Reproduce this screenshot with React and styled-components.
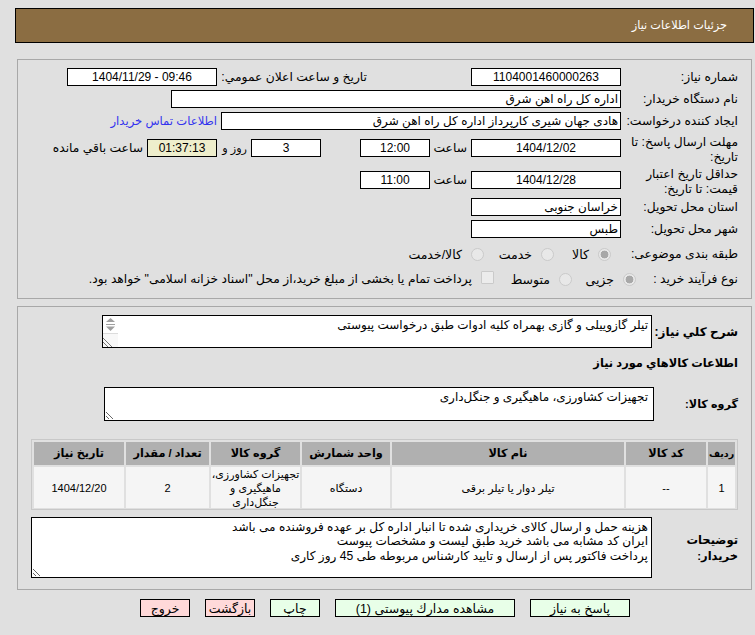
import React from "react";
import styled, { createGlobalStyle } from "styled-components";

const Global = createGlobalStyle`
  html, body { margin: 0; padding: 0; background: #e0e0e0; }
  body { font: 12px "Liberation Sans", "DejaVu Sans", sans-serif; color: #000; }
  * { box-sizing: border-box; }
`;

const Page = styled.div`
  width: 755px;
  height: 635px;
  overflow: hidden;
  padding-top: 8px;
  direction: rtl;
`;

const Header = styled.div`
  margin: 0 1px 16px 0;
  width: 739px;
  height: 35px;
  background: #8b6d42;
  border: 1px solid #000;
  color: #fff;
  font-size: 11.3px;
  display: flex;
  align-items: center;
  padding-right: 26px;
`;

const Panel = styled.div`
  width: 735px;
  margin: ${(p) => p.$mt || 0}px 3px 0 0;
  height: ${(p) => p.$h}px;
  border: 1px solid #a8a8a8;
  padding: 8px 13px 0 0;
  display: flex;
  flex-direction: column;
  gap: ${(p) => p.$gap || 0}px;
`;

const Row = styled.div`
  display: flex;
  align-items: center;
  height: ${(p) => p.$h || 18}px;
  margin-top: ${(p) => p.$mt || 0}px;
`;

const Label = styled.div`
  flex: none;
  width: ${(p) => p.$w || 117}px;
  padding-top: ${(p) => p.$pt || 0}px;
  line-height: ${(p) => (p.$bold ? 16 : 14.5)}px;
  font-weight: ${(p) => (p.$bold ? 700 : 400)};
  font-size: ${(p) => p.$fs || 12.3}px;
  white-space: ${(p) => (p.$nowrap ? "nowrap" : "normal")};
`;

const Field = styled.div`
  flex: none;
  width: ${(p) => p.$w || 150}px;
  height: 18px;
  margin-right: ${(p) => p.$mr || 0}px;
  background: ${(p) => p.$bg || "#fff"};
  border: 1px solid #000;
  text-align: ${(p) => (p.$start ? "right" : "center")};
  padding: 0 2px;
  line-height: 16px;
  font-size: 12px;
  white-space: nowrap;
  overflow: hidden;
`;

const Ltr = styled.span`
  direction: ltr;
  unicode-bidi: isolate;
`;

const Text = styled.span`
  flex: none;
  width: ${(p) => p.$w}px;
  margin-right: ${(p) => p.$mr ?? 4}px;
  font-size: ${(p) => p.$fs || 12.3}px;
  white-space: nowrap;
`;

const Link = styled.a`
  flex: none;
  margin-right: 4px;
  color: #3333ee;
  font-size: 11.6px;
  text-decoration: none;
  white-space: nowrap;
`;

const Option = styled.label`
  flex: none;
  width: ${(p) => p.$w}px;
  display: flex;
  align-items: center;
  gap: ${(p) => p.$gap || 9}px;
  font-size: ${(p) => p.$fs || 12.5}px;
  white-space: nowrap;
`;

const Radio = styled.input.attrs({ type: "radio", disabled: true })`
  appearance: none;
  margin: 0;
  width: 13px;
  height: 13px;
  flex: none;
  border: 1px solid #cacaca;
  border-radius: 50%;
  background: #e8e8e8;
  &:checked {
    background: radial-gradient(circle, #a8a8a8 0 3.6px, #e8e8e8 4.2px);
  }
`;

const Check = styled.input.attrs({ type: "checkbox", disabled: true })`
  appearance: none;
  margin: 0 0 3px 0;
  width: 13px;
  height: 13px;
  flex: none;
  border: 1px solid #cacaca;
  border-radius: 1px;
  background: #ececec;
`;

const AreaWrap = styled.div`
  position: relative;
  flex: none;
  display: block;
`;

const Area = styled.textarea.attrs({ readOnly: true, dir: "rtl" })`
  display: block;
  width: ${(p) => p.$w}px;
  height: ${(p) => p.$h}px;
  background: #fff;
  border: 1px solid #000;
  border-radius: 0;
  padding: 2px ${(p) => p.$pr || 3}px 2px 3px;
  margin: 0;
  font: ${(p) => p.$fs || 12}px/14.25px "Liberation Sans", "DejaVu Sans", sans-serif;
  color: #000;
  resize: both;
  outline: none;
  overflow: hidden;
`;

const ScrollArt = styled.svg`
  position: absolute;
  left: 1px;
  top: 1px;
  width: 15px;
  height: 31px;
  pointer-events: none;
`;

const Grid = styled.div`
  width: 707px;
  height: 71px;
  margin-top: ${(p) => p.$mt || 0}px;
  border: 1px solid #c8c8c8;
  padding: 2px 2px 1px;
  display: grid;
  grid-template-columns: 27px 80px 232px 88px 89px 83px 90px;
  grid-template-rows: 23px 41px;
  gap: 2px;
`;

const Th = styled.div`
  background: #b0b0b0;
  font-weight: 700;
  font-size: ${(p) => p.$fs || 11.3}px;
  display: flex;
  align-items: center;
  justify-content: center;
  white-space: nowrap;
`;

const Td = styled.div`
  background: #f5f5f5;
  font-size: 11px;
  line-height: 14px;
  text-align: center;
  display: flex;
  align-items: center;
  justify-content: center;
`;

const Actions = styled.div`
  width: 490px;
  margin: 9px 125px 0 0;
  display: flex;
  gap: 15px;
`;

const Btn = styled.button`
  flex: none;
  width: ${(p) => p.$w || 50}px;
  height: 18px;
  padding: 0;
  border: 1px solid #000;
  border-radius: 0;
  background: ${(p) => (p.$danger ? "#ffd9d9" : "#e8ffe8")};
  font: 12.5px "Liberation Sans", "DejaVu Sans", sans-serif;
  color: #000;
  white-space: nowrap;
`;

const heads = ["ردیف", "کد کالا", "نام کالا", "واحد شمارش", "گروه کالا", "تعداد / مقدار", "تاریخ نیاز"];
const cells = ["1", "--", "تیلر دوار یا تیلر برقی", "دستگاه", "تجهیزات کشاورزی، ماهیگیری و جنگل‌داری", "2", "1404/12/20"];
const notes = "هزینه حمل و ارسال کالای خریداری شده تا انبار اداره کل بر عهده فروشنده می باشد\nایران کد مشابه می باشد خرید طبق لیست و مشخصات پیوست\nپرداخت فاکتور پس از ارسال و تایید کارشناس مربوطه طی 45 روز کاری";

export default function App() {
  return (
    <Page>
      <Global />
      <Header>جزئیات اطلاعات نیاز</Header>
      <Panel $h={240} $gap={4}>
        <Row>
          <Label>شماره نیاز:</Label>
          <Field>1104001460000263</Field>
          <Text $mr={104} $w={146}>تاریخ و ساعت اعلان عمومي:</Text>
          <Field $mr={4}><Ltr>1404/11/29 - 09:46</Ltr></Field>
        </Row>
        <Row>
          <Label>نام دستگاه خریدار:</Label>
          <Field $w={450} $start>اداره کل راه اهن شرق</Field>
        </Row>
        <Row>
          <Label>ایجاد کننده درخواست:</Label>
          <Field $w={400} $start>هادی جهان شیری کارپرداز اداره کل راه اهن شرق</Field>
          <Link href="#">اطلاعات تماس خریدار</Link>
        </Row>
        <Row $h={28}>
          <Label $pt={3}>مهلت ارسال پاسخ: تا تاریخ:</Label>
          <Field>1404/12/02</Field>
          <Text $w={33}>ساعت</Text>
          <Field $w={70} $mr={4}>12:00</Field>
          <Field $w={70} $mr={39}>3</Field>
          <Text $w={22} $fs={11.2}>روز و</Text>
          <Field $w={70} $mr={8} $bg="#eeeecc">01:37:13</Field>
          <Text $w={90}>ساعت باقي مانده</Text>
        </Row>
        <Row $h={28}>
          <Label $pt={3}>حداقل تاریخ اعتبار قیمت: تا تاریخ:</Label>
          <Field>1404/12/28</Field>
          <Text $w={33}>ساعت</Text>
          <Field $w={70} $mr={4}>11:00</Field>
        </Row>
        <Row>
          <Label>استان محل تحویل:</Label>
          <Field $start>خراسان جنوبی</Field>
        </Row>
        <Row>
          <Label>شهر محل تحویل:</Label>
          <Field $start>طبس</Field>
        </Row>
        <Row $h={24}>
          <Label $w={127}>طبقه بندی موضوعی:</Label>
          <Option $w={57}><Radio name="a" defaultChecked />کالا</Option>
          <Option $w={70}><Radio name="a" />خدمت</Option>
          <Option $w={90}><Radio name="a" />کالا/خدمت</Option>
        </Row>
        <Row>
          <Label $w={102}>نوع فرآیند خرید :</Label>
          <Option $w={64}><Radio name="b" defaultChecked />جزیی</Option>
          <Option $w={78}><Radio name="b" />متوسط</Option>
          <Option $w={400} $fs={12.3}><Check />پرداخت تمام یا بخشی از مبلغ خرید،از محل "اسناد خزانه اسلامی" خواهد بود.</Option>
        </Row>
      </Panel>
      <Panel $mt={7} $h={284}>
        <Row $h={33}>
          <Label $w={86} $bold $nowrap $fs={12}>شرح کلي نیاز:</Label>
          <AreaWrap>
            <Area $w={550} $h={33} defaultValue="تیلر گازوییلی و گازی بهمراه کلیه ادوات طبق درخواست پیوستی" />
            <ScrollArt viewBox="0 0 15 31" aria-hidden="true">
              <rect x="0" y="0" width="15" height="31" fill="#fff" />
              <path d="M3 6h9L7.5 2z" fill="#a0a0a0" />
              <rect x="3" y="8" width="9" height="1" fill="#a0a0a0" />
              <path d="M3 10.5h9L7.5 15z" fill="#a0a0a0" />
              <rect x="0" y="17" width="15" height="1" fill="#dcdcdc" />
              <rect x="0" y="18" width="15" height="13" fill="#f8f8f8" />
              <path d="M0 22l9 9M0 26l5 5" stroke="#777" strokeWidth="1" fill="none" />
            </ScrollArt>
          </AreaWrap>
        </Row>
        <Row $h={14} $mt={8}>
          <Label $w={300} $bold $fs={11.4}>اطلاعات کالاهاي مورد نیاز</Label>
        </Row>
        <Row $h={34} $mt={17}>
          <Label $w={84} $bold $fs={11.2}>گروه کالا:</Label>
          <Area $w={550} $h={34} $pr={5} defaultValue="تجهیزات کشاورزی، ماهیگیری و جنگل‌داری" />
        </Row>
        <Grid $mt={18}>
          {heads.map((h, i) => <Th key={h} $fs={i === 0 ? 9.5 : undefined}>{h}</Th>)}
          {cells.map((c) => <Td key={c}>{c}</Td>)}
        </Grid>
        <Row $h={61} $mt={7}>
          <Label $w={86} $bold $fs={11.5}>توضیحات خریدار:</Label>
          <Area $w={621} $h={61} $fs={12.1} defaultValue={notes} />
        </Row>
      </Panel>
      <Actions>
        <Btn $w={100}>پاسخ به نیاز</Btn>
        <Btn $w={180}>مشاهده مدارك پیوستی (1)</Btn>
        <Btn>چاپ</Btn>
        <Btn $danger>بازگشت</Btn>
        <Btn $danger>خروج</Btn>
      </Actions>
    </Page>
  );
}
